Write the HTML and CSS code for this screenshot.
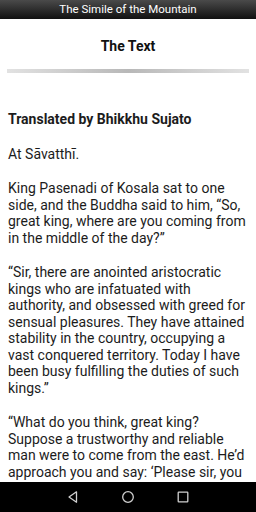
FILE: index.html
```html
<!DOCTYPE html>
<html lang="en">
<head>
  <meta charset="UTF-8" />
  <meta name="viewport" content="width=device-width, initial-scale=1.0"/>
  <title>The Simile of the Mountain</title>
  <link rel="stylesheet" href="styles.css">
</head>
<body>
  <header class="titlebar">The Simile of the Mountain</header>
  <main>
    <h1>The Text</h1>
    <div class="rule"></div>
    <article class="sutta">
      <p class="author">Translated by Bhikkhu Sujato</p>
      <p>At Sāvatthī.</p>
      <p>King Pasenadi of Kosala sat to one side, and the Buddha said to him, “So, great king, where are you coming from in the middle of the day?”</p>
      <p>“Sir, there are anointed aristocratic kings who are infatuated with authority, and obsessed with greed for sensual pleasures. They have attained stability in the country, occupying a vast conquered territory. Today I have been busy fulfilling the duties of such kings.”</p>
      <p>“What do you think, great king? Suppose a trustworthy and reliable man were to come from the east. He’d approach you and say: ‘Please sir, you should know this. I have come from the east.’</p>
    </article>
  </main>
  <nav class="sysnav">
    <svg width="14" height="14" viewBox="0 0 14 14"><path d="M10.5 1.8 L3 7 L10.5 12.2 Z" fill="none" stroke="#d0d0d0" stroke-width="1.3" stroke-linejoin="round"/></svg>
    <svg width="14" height="14" viewBox="0 0 14 14"><circle cx="7" cy="7" r="5.3" fill="none" stroke="#d0d0d0" stroke-width="1.3"/></svg>
    <svg width="14" height="14" viewBox="0 0 14 14"><rect x="2.2" y="2.2" width="9.6" height="9.6" rx="0.6" fill="none" stroke="#d0d0d0" stroke-width="1.3"/></svg>
  </nav>
</body>
</html>
```

FILE: styles.css
```css
body { font-family: Roboto, "Noto Sans", sans-serif; background: #fff; color: #1c1c1c; margin: 0; padding: 0; height: 512px; overflow: hidden; }
.titlebar { height: 19px; line-height: 19px; text-align: center; font-size: 11.5px; color: #fff; background: linear-gradient(#4a4a4a, #111); }
h1 { font-size: 14px; font-weight: bold; text-align: center; margin: 0; padding-top: 19px; height: 31px; line-height: 17px; color: #111; }
.rule { margin: 0 7px; height: 4px; background: linear-gradient(to right, #e2e2e2, #b8b8b8 50%, #e2e2e2); }
.sutta { padding: 38px 8px 0; font-size: 14px; line-height: 16.5px; }
.sutta p { margin: 0 0 18px; }
.author { font-weight: bold; }
.sysnav { position: fixed; left: 0; right: 0; bottom: 0; height: 30px; background: #000; display: flex; justify-content: center; align-items: center; gap: 41px; }
```
